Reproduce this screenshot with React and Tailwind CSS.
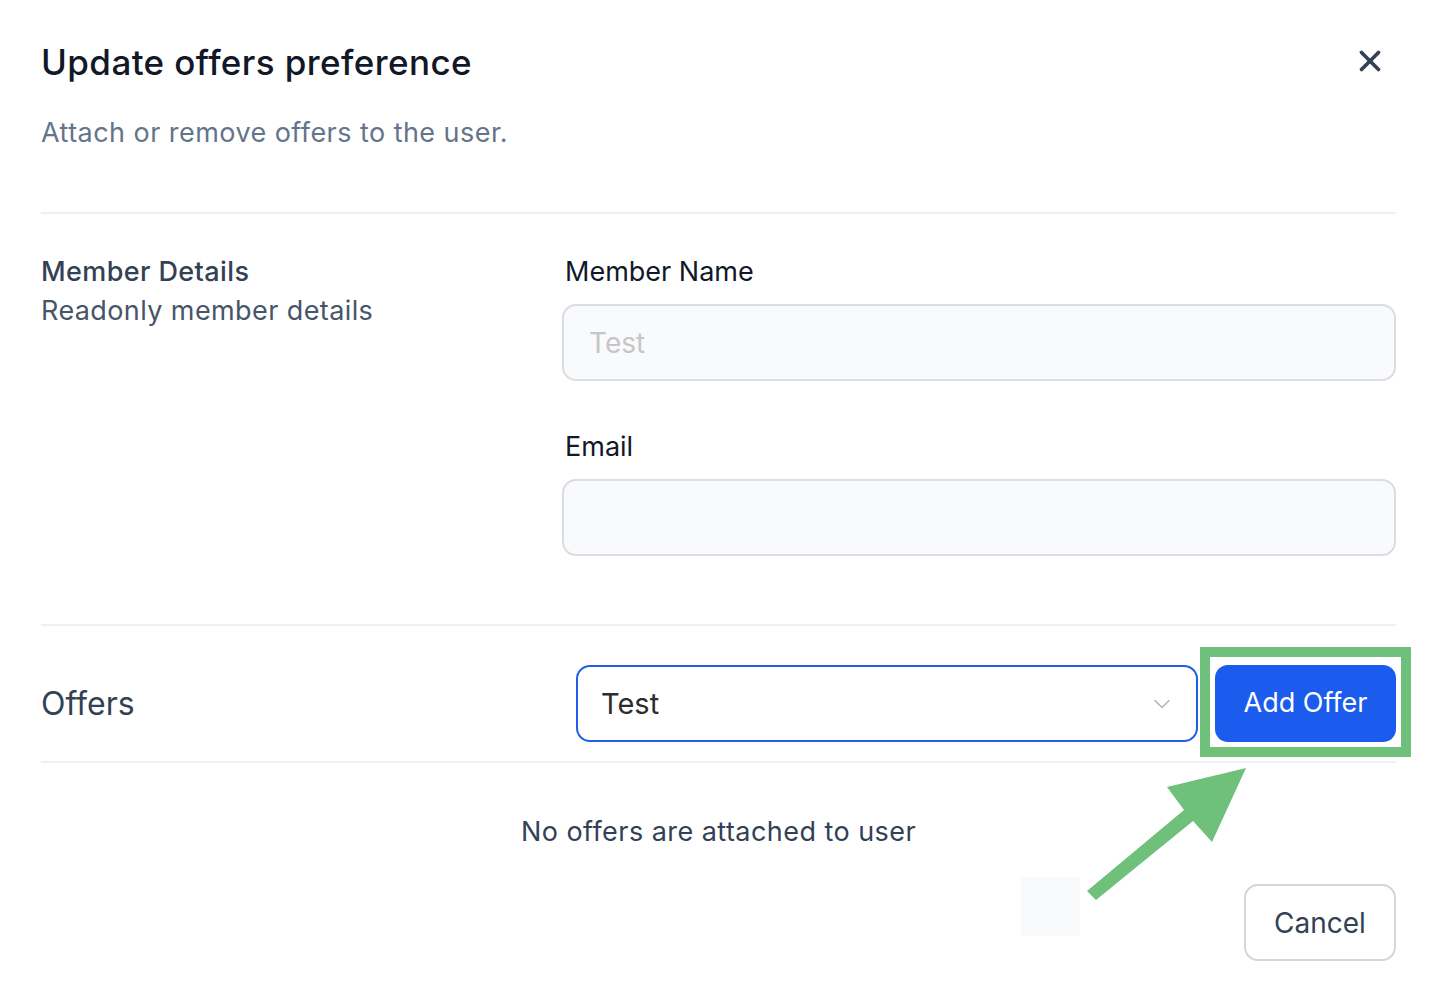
import { X, ChevronDown } from "lucide-react";

function Field({ label, placeholder, className = "" }) {
  return (
    <div className={className}>
      <label className="block pl-[3px] text-[27px] leading-[38px] text-[#111827]">{label}</label>
      <input
        disabled
        placeholder={placeholder}
        className="mt-[13px] block h-[77px] w-full rounded-[14px] border-2 border-[#dcdde2] bg-[#f9fafb] px-[25px] text-[28px] text-[#111827] placeholder:text-[#c6c6c8] outline-none"
      />
    </div>
  );
}

export default function App() {
  return (
    <div
      className="relative min-h-[999px] w-[1431px] bg-white pl-[41px] pr-[35px] pt-[40px]"
      style={{ fontFamily: "Inter, 'Liberation Sans', sans-serif" }}
    >
      {/* header */}
      <div className="flex items-start justify-between">
        <h1 className="text-[35px] font-medium leading-[44px] tracking-[0.4px] text-[#111827]">Update offers preference</h1>
        <button className="mr-[9px] mt-[4px] text-[#334155]">
          <X size={34} strokeWidth={2.6} />
        </button>
      </div>
      <p className="mt-[29px] text-[27px] leading-[40px] tracking-[0.45px] text-[#64748b]">Attach or remove offers to the user.</p>

      {/* member details */}
      <div className="mt-[59px] grid grid-cols-[521px_1fr] border-t-2 border-[#edf0f4] pb-[68px] pt-[39px]">
        <div>
          <h2 className="text-[27px] font-medium leading-[38px] tracking-[0.4px] text-[#334155]">Member Details</h2>
          <p className="mt-[1px] text-[27px] leading-[38px] tracking-[0.4px] text-[#475569]">Readonly member details</p>
        </div>
        <div>
          <Field label="Member Name" placeholder="Test" />
          <Field label="Email" placeholder="" className="mt-[47px]" />
        </div>
      </div>

      {/* offers */}
      <div className="flex items-center border-y-2 border-[#edf0f4] pb-[19px] pt-[39px]">
        <h2 className="w-[535px] text-[32px] leading-[40px] text-[#334155]">Offers</h2>
        <div className="flex h-[77px] w-[622px] items-center justify-between rounded-[14px] border-2 border-[#1f5fea] bg-white pl-[23px] pr-[20px]">
          <span className="text-[29px] text-[#2d2d2d]">Test</span>
          <ChevronDown size={28} strokeWidth={1.3} className="text-[#b5b5b5]" />
        </div>
        <div className="relative ml-[17px]">
          <button className="h-[77px] w-[181px] rounded-[13px] bg-[#1b5cef] text-[27px] text-white">Add Offer</button>
          <div className="pointer-events-none absolute -bottom-[15px] -left-[15px] -right-[15px] -top-[18px] border-[10px] border-[#6fc07a]" />
        </div>
      </div>

      <p className="mt-[50px] text-center text-[27px] leading-[38px] tracking-[0.45px] text-[#334155]">No offers are attached to user</p>

      {/* footer */}
      <div className="mt-[33px] flex items-start justify-end">
        <div className="mt-[-7px] h-[59px] w-[59px] bg-[#f9fafb]" />
        <button className="ml-[164px] h-[77px] w-[152px] rounded-[14px] border-2 border-[#d1d6df] bg-white text-[28px] text-[#334155]">
          Cancel
        </button>
      </div>

      {/* annotation arrow */}
      <svg className="pointer-events-none absolute left-[1080px] top-[760px]" width="180" height="150" viewBox="1080 760 180 150">
        <polygon
          fill="#6fc07a"
          points="1087,891 1184,810 1167,787 1246,768 1212,842 1193,821 1096,900"
        />
      </svg>
    </div>
  );
}
